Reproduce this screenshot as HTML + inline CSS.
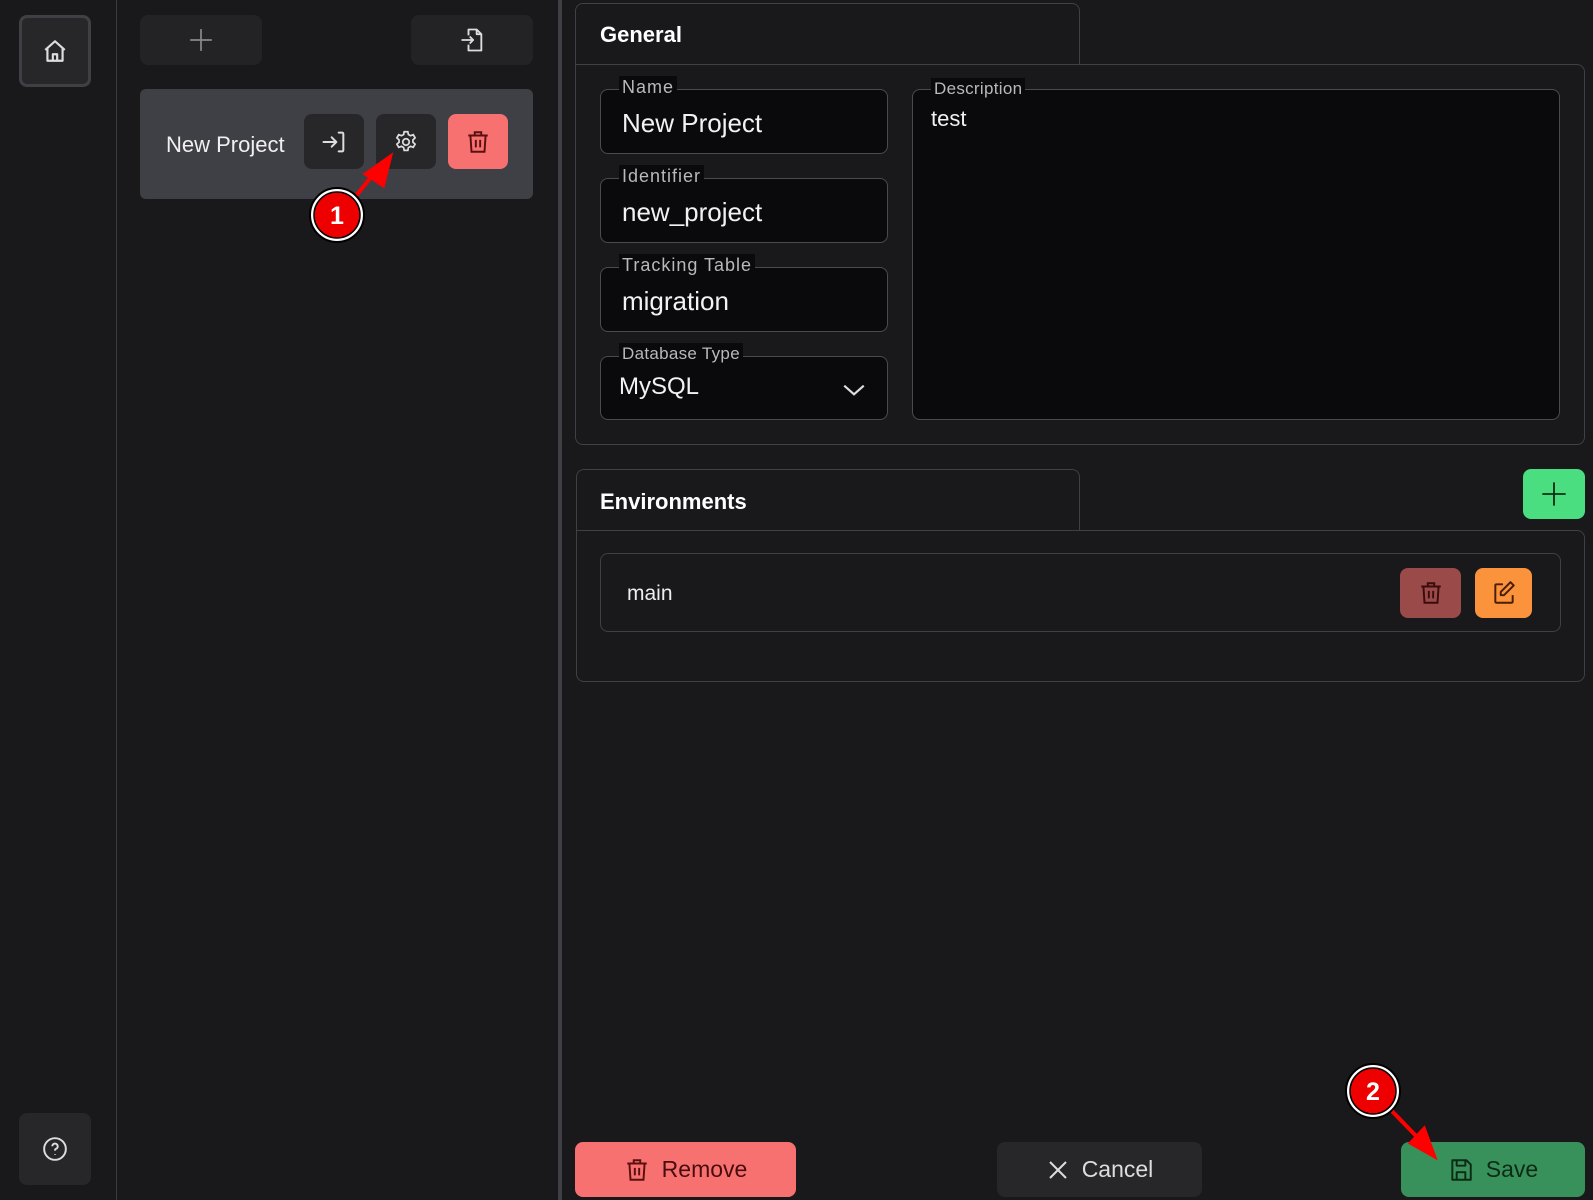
<!DOCTYPE html>
<html><head><meta charset="utf-8"><style>
*{box-sizing:border-box;margin:0;padding:0}
body{width:1593px;height:1200px;background:#19191c;font-family:"Liberation Sans","DejaVu Sans",sans-serif;color:#e8e8ea;position:relative;overflow:hidden}
.a{position:absolute}
.btn{position:absolute;border-radius:8px;display:flex;align-items:center;justify-content:center}
.fld{position:absolute;border:1px solid #4a4a50;border-radius:8px;background:#0a0a0c}
.lbl{position:absolute;top:-14px;left:18px;background:#0a0a0c;color:#b8b8bd;font-size:18px;padding:0 3px;letter-spacing:1px;line-height:22px}
.val{position:absolute;left:21px;font-size:26px;color:#f2f2f2}
</style></head><body>
<div class="a" style="left:116px;top:0;width:1px;height:1200px;background:#3a3a40"></div>
<div class="a" style="left:558px;top:0;width:4px;height:1200px;background:#3f3f46"></div>

<div class="btn" style="left:19px;top:15px;width:72px;height:72px;background:#27272a;border:3px solid #3f3f46">
<svg width="26" height="26" viewBox="0 0 24 24" fill="none" stroke="#ddd" stroke-width="2" stroke-linejoin="round"><path d="M3 11 12 3l9 8M5 9v12h14V9M10 21v-6h4v6"/></svg></div>
<div class="btn" style="left:19px;top:1113px;width:72px;height:72px;background:#27272a">
<svg width="26" height="26" viewBox="0 0 24 24" fill="none" stroke="#ddd" stroke-width="1.8"><circle cx="12" cy="12" r="10"/><path d="M9.5 9.5a2.5 2.5 0 1 1 3.5 2.3c-.7.3-1 .9-1 1.7M12 17v.5"/></svg></div>

<div class="btn" style="left:140px;top:15px;width:122px;height:50px;background:#232326">
<svg width="26" height="26" viewBox="0 0 24 24" stroke="#888" stroke-width="1.6"><path d="M12 2v20M2 12h20"/></svg></div>
<div class="btn" style="left:411px;top:15px;width:122px;height:50px;background:#232326">
<svg width="28" height="28" viewBox="0 0 24 24" fill="none" stroke="#ddd" stroke-width="1.6" stroke-linejoin="round"><path d="M9 8V3h7l4 4v14H9v-5M16 3v4h4M3 12h10M10 9l3 3-3 3"/></svg></div>

<div class="a" style="left:140px;top:89px;width:393px;height:110px;background:#3f3f46;border-radius:6px"></div>
<div class="a" style="left:166px;top:132px;font-size:22px;color:#f0f0f0">New Project</div>
<div class="btn" style="left:304px;top:114px;width:60px;height:55px;background:#27272a">
<svg width="28" height="28" viewBox="0 0 24 24" fill="none" stroke="#ddd" stroke-width="1.7" stroke-linecap="round" stroke-linejoin="round"><path d="M3 12h11M10 8l4 4-4 4M16 4h3a1 1 0 0 1 1 1v14a1 1 0 0 1-1 1h-3"/></svg></div>
<div class="btn" style="left:376px;top:114px;width:60px;height:55px;background:#27272a">
<svg width="26" height="26" viewBox="0 0 24 24" fill="none" stroke="#ddd" stroke-width="1.6"><circle cx="12" cy="12" r="3"/><path d="M10.3 2.5h3.4l.5 2.6 2 1.1 2.5-.9 1.7 2.9-2 1.8v2.2l2 1.8-1.7 2.9-2.5-.9-2 1.1-.5 2.6h-3.4l-.5-2.6-2-1.1-2.5.9-1.7-2.9 2-1.8V10L3.6 8.2l1.7-2.9 2.5.9 2-1.1z"/></svg></div>
<div class="btn" style="left:448px;top:114px;width:60px;height:55px;background:#f87171">
<svg width="26" height="26" viewBox="0 0 24 24" fill="none" stroke="#5a1010" stroke-width="1.8"><path d="M3 6h18M9 6V3h6v3M5 6l1 15h12l1-15M10 10v7M14 10v7"/></svg></div>

<div class="a" style="left:575px;top:3px;width:505px;height:62px;border:1px solid #3f3f46;border-bottom:none;border-radius:8px 8px 0 0"></div>
<div class="a" style="left:600px;top:22px;font-size:22px;font-weight:bold;color:#fff">General</div>
<div class="a" style="left:575px;top:64px;width:1010px;height:381px;border:1px solid #3f3f46;border-radius:0 8px 8px 8px"></div>

<div class="fld" style="left:600px;top:89px;width:288px;height:65px"><div class="lbl">Name</div><div class="val" style="top:18px">New Project</div></div>
<div class="fld" style="left:600px;top:178px;width:288px;height:65px"><div class="lbl">Identifier</div><div class="val" style="top:18px">new_project</div></div>
<div class="fld" style="left:600px;top:267px;width:288px;height:65px"><div class="lbl">Tracking Table</div><div class="val" style="top:18px">migration</div></div>
<div class="fld" style="left:600px;top:356px;width:288px;height:64px"><div class="lbl" style="font-size:17px;letter-spacing:0.3px">Database Type</div><div class="val" style="left:18px;top:16px;font-size:24px">MySQL</div>
<svg class="a" style="left:240px;top:20px" width="26" height="26" viewBox="0 0 24 24" fill="none" stroke="#ddd" stroke-width="2"><path d="M3 8l9 8 9-8"/></svg></div>
<div class="fld" style="left:912px;top:89px;width:648px;height:331px"><div class="lbl" style="font-size:17px;letter-spacing:0.3px;left:18px;top:-12px">Description</div><div class="a" style="left:18px;top:16px;font-size:22px;color:#f2f2f2">test</div></div>

<div class="a" style="left:576px;top:469px;width:504px;height:62px;border:1px solid #3f3f46;border-bottom:none;border-radius:8px 8px 0 0"></div>
<div class="a" style="left:600px;top:489px;font-size:22px;font-weight:bold;color:#fff">Environments</div>
<div class="btn" style="left:1523px;top:469px;width:62px;height:50px;background:#4ade80">
<svg width="28" height="28" viewBox="0 0 24 24" stroke="#0d3018" stroke-width="1.6"><path d="M12 2v20M2 12h20"/></svg></div>
<div class="a" style="left:576px;top:530px;width:1009px;height:152px;border:1px solid #3f3f46;border-radius:0 8px 8px 8px"></div>
<div class="a" style="left:600px;top:553px;width:961px;height:79px;border:1px solid #3f3f46;border-radius:8px"></div>
<div class="a" style="left:627px;top:582px;font-size:21px;color:#eee">main</div>
<div class="btn" style="left:1400px;top:568px;width:61px;height:50px;background:#9b4a4a">
<svg width="26" height="26" viewBox="0 0 24 24" fill="none" stroke="#3a0c0c" stroke-width="1.8"><path d="M3 6h18M9 6V3h6v3M5 6l1 15h12l1-15M10 10v7M14 10v7"/></svg></div>
<div class="btn" style="left:1475px;top:568px;width:57px;height:50px;background:#fb923c">
<svg width="26" height="26" viewBox="0 0 24 24" fill="none" stroke="#4a1d05" stroke-width="1.8" stroke-linejoin="round"><path d="M11 4H5a1 1 0 0 0-1 1v15a1 1 0 0 0 1 1h14a1 1 0 0 0 1-1v-6M18 2l3 3-9 9H9v-3z"/></svg></div>

<div class="btn" style="left:575px;top:1142px;width:221px;height:55px;background:#f87171;gap:12px">
<svg width="26" height="26" viewBox="0 0 24 24" fill="none" stroke="#5a1010" stroke-width="1.8"><path d="M3 6h18M9 6V3h6v3M5 6l1 15h12l1-15M10 10v7M14 10v7"/></svg><span style="font-size:23px;color:#4a0d0d">Remove</span></div>
<div class="btn" style="left:997px;top:1142px;width:205px;height:55px;background:#27272a;gap:12px">
<svg width="24" height="24" viewBox="0 0 24 24" stroke="#ddd" stroke-width="2"><path d="M4 4l16 16M20 4L4 20"/></svg><span style="font-size:23px;color:#ddd">Cancel</span></div>
<div class="btn" style="left:1401px;top:1142px;width:184px;height:55px;background:#38915a;gap:12px">
<svg width="26" height="26" viewBox="0 0 24 24" fill="none" stroke="#0d2a16" stroke-width="1.8" stroke-linejoin="round"><path d="M4 3h13l4 4v14H4zM8 3v5h8V3M8 21v-7h8v7"/></svg><span style="font-size:23px;color:#0d2a16">Save</span></div>

<svg class="a" style="left:0;top:0" width="1593" height="1200">
<g stroke="#ff0000" stroke-width="4" fill="#ff0000"><path d="M356 196 375 172"/><path d="M390 157 383 185 366 174z"/>
<path d="M1388 1107 1420 1140"/><path d="M1434 1156 1424 1129 1411 1143z"/></g>
<circle cx="337" cy="215" r="27" fill="#fff" stroke="#000" stroke-width="2"/><circle cx="337" cy="215" r="23" fill="#ee0000" stroke="#000" stroke-width="1.5"/>
<text x="337" y="224" text-anchor="middle" font-family="Liberation Sans" font-weight="bold" font-size="25" fill="#fff">1</text>
<circle cx="1373" cy="1091" r="27" fill="#fff" stroke="#000" stroke-width="2"/><circle cx="1373" cy="1091" r="23" fill="#ee0000" stroke="#000" stroke-width="1.5"/>
<text x="1373" y="1100" text-anchor="middle" font-family="Liberation Sans" font-weight="bold" font-size="25" fill="#fff">2</text>
</svg>
</body></html>
